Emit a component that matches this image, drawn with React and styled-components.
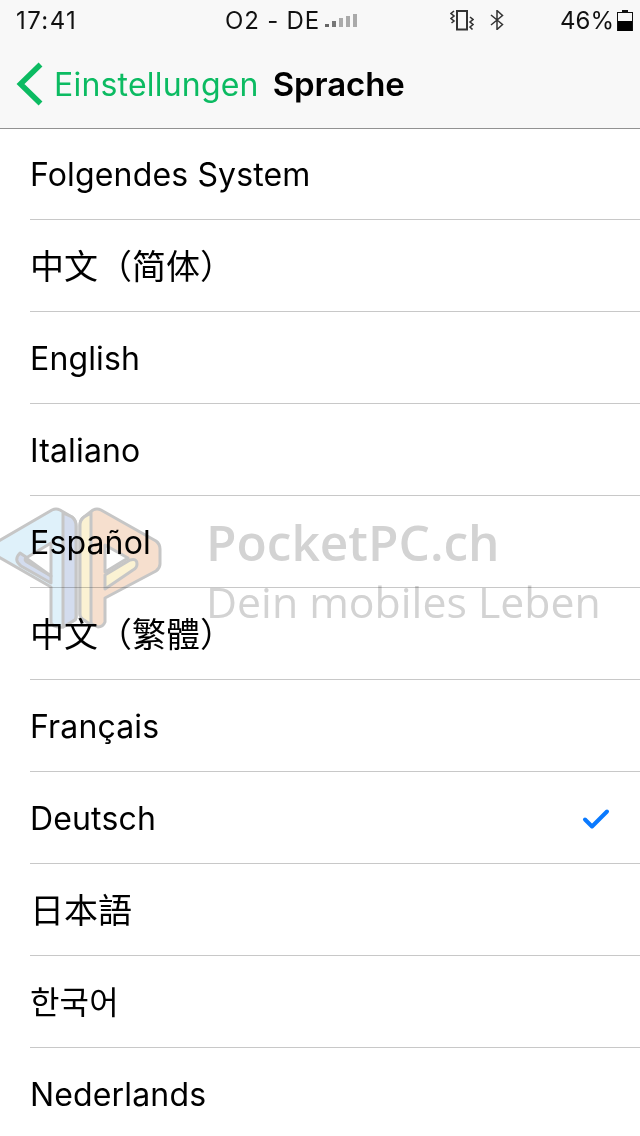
import React from 'react';
import styled, { createGlobalStyle } from 'styled-components';

const GlobalStyle = createGlobalStyle`
  html, body { margin: 0; padding: 0; background: #fff; }
  body { width: 640px; height: 1136px; overflow: hidden; }
`;

const sansStack = `"Inter", "Liberation Sans", "Noto Sans CJK SC", sans-serif`;

const Screen = styled.div`
  position: relative;
  width: 640px;
  height: 1136px;
  overflow: hidden;
  background: #fff;
  font-family: ${sansStack};
  color: #000;
`;

const Header = styled.header`
  position: relative;
  height: 128px;
  background: #f8f8f8;
  box-shadow: 0 1px 0 #929292;
  display: flex;
  flex-direction: column;
`;

const StatusBar = styled.div`
  height: 40px;
  padding: 0 7px 0 16px;
  display: grid;
  grid-template-columns: 209px 225px 1fr;
  align-items: center;
  font-size: 24px;
  color: #111;
`;

const Clock = styled.span`
  letter-spacing: 1.4px;
`;

const Carrier = styled.span`
  letter-spacing: 0.8px;
`;

const Battery = styled.span`
  margin: 0 3px 0 auto;
`;

const StatusGroup = styled.div`
  display: flex;
  align-items: center;
`;

const IconSlot = styled.span`
  display: flex;
  margin-left: ${p => p.$left || 0}px;
`;

const NavBar = styled.nav`
  flex: 1;
  display: flex;
  align-items: center;
  padding-left: 16px;
`;

const BackLabel = styled.span`
  margin-left: 10px;
  font-size: 32px;
  letter-spacing: 0.2px;
  color: #0cbb62;
`;

const Title = styled.h1`
  margin: 0 0 0 14px;
  font-size: 33px;
  font-weight: 600;
  letter-spacing: -0.1px;
`;

const List = styled.ul`
  margin: 0;
  padding: 0;
  list-style: none;
`;

const Row = styled.li`
  height: 92px;
  margin-left: 30px;
  padding: 2px 30px 0 0;
  box-sizing: border-box;
  display: flex;
  align-items: center;
  justify-content: space-between;
  font-size: ${p => (p.$cjk ? '34px' : '32px')};
  letter-spacing: ${p => (p.$cjk ? 0 : '0.15px')};
  line-height: 1;
  border-bottom: 1px solid #c8c8c8;
  &:last-child { border-bottom: 0; }
`;

const Watermark = styled.div`
  position: absolute;
  left: 206px;
  top: 511px;
  color: #d3d3d3;
  font-family: "Open Sans", "Liberation Sans", sans-serif;
  pointer-events: none;
  mix-blend-mode: multiply;
`;

const MarkTitle = styled.div`
  font-size: 49.6px;
  line-height: 62px;
  font-weight: 600;
`;

const MarkSub = styled.div`
  font-size: 42.8px;
  line-height: 58px;
`;

const Logo = styled.svg`
  position: absolute;
  left: 0;
  top: 500px;
  pointer-events: none;
  mix-blend-mode: multiply;
`;

const languages = [
  { name: 'Folgendes System' },
  { name: '中文（简体）', cjk: true },
  { name: 'English' },
  { name: 'Italiano' },
  { name: 'Español' },
  { name: '中文（繁體）', cjk: true },
  { name: 'Français' },
  { name: 'Deutsch', checked: true },
  { name: '日本語', cjk: true },
  { name: '한국어' },
  { name: 'Nederlands' },
];

function SignalBars() {
  return (
    <svg width="34" height="16" viewBox="0 0 34 16" style={{ marginLeft: 5, marginTop: 2 }}>
      <rect x="0" y="11" width="4" height="3" fill="#666" />
      <rect x="7" y="8" width="4" height="6" fill="#777" />
      <rect x="14" y="5" width="4" height="9" fill="#aaa" />
      <rect x="21" y="3" width="4" height="11" fill="#aaa" />
      <rect x="28" y="1" width="4" height="13" fill="#aaa" />
    </svg>
  );
}

function VibrateIcon() {
  return (
    <svg width="24" height="21" viewBox="0 0 24 21" fill="none" stroke="#333">
      <rect x="7" y="1" width="10" height="18.5" strokeWidth="2" />
      <path d="M4 1 L1 3.5 L4 6 L1 8.5 L4 11 L1.5 13" strokeWidth="1.6" />
      <path d="M20 7 L23 9.5 L20 12 L23 14.5 L20 17 L22.5 19.5" strokeWidth="1.6" />
    </svg>
  );
}

function BluetoothIcon() {
  return (
    <svg width="14" height="20" viewBox="0 0 14 20" fill="none" stroke="#333" strokeWidth="1.5">
      <path d="M1 5 L12.5 14.5 L7 19.5 V0.5 L12.5 5.5 L1 15" />
    </svg>
  );
}

function BatteryIcon() {
  return (
    <svg width="16" height="21" viewBox="0 0 16 21">
      <rect x="5" y="0" width="6" height="2" fill="#111" />
      <rect x="0.5" y="2.5" width="15" height="18" fill="none" stroke="#111" />
      <rect x="1" y="11" width="14" height="10" fill="#000" />
    </svg>
  );
}

function BackChevron() {
  return (
    <svg width="28" height="44" viewBox="0 0 28 44" fill="none" stroke="#0cbb62" strokeWidth="5.5">
      <path d="M24.5 2.5 L4.5 22 L24.5 41.5" />
    </svg>
  );
}

function CheckMark() {
  return (
    <svg width="28" height="22" viewBox="0 0 28 22" fill="none" stroke="#0a7aff" strokeWidth="4" strokeLinecap="round" strokeLinejoin="round">
      <path d="M3 11.5 L10 18.5 L25 3.5" />
    </svg>
  );
}

// coordinates are page pixels, the viewBox starts at y=500
function PocketLogo() {
  return (
    <Logo width="170" height="135" viewBox="0 500 170 135">
      <g stroke="#c6c6c6" strokeWidth="3" strokeLinejoin="round">
        <path d="M52 510 Q56 508 60 510 L72 517 Q76 520 76 526 V617 Q76 620 73 621 L63 627 Q58 628 54 626 L51 623 V587 L-3 556 Q-11 549 -3 542 Z" fill="#dff1fa" />
        <path d="M63 513 L72 517 Q76 520 76 526 V617 Q76 620 73 621 L63 627 Z" fill="#d3dcee" />
        <path d="M20 553 L26 557 Q24 560 27 562 L51 576 V583 L21 566 Q13 560 20 553 Z" fill="#d3dcee" />
        <path d="M26 558 L51 543 V576 Z" fill="#fff" />
        <path d="M93 510 Q97 508 101 510 L156 541 Q160 544 160 549 V564 Q160 568 156 571 L105 598 V622 Q103 627 98 627 L84 620 Q80 618 80 614 V525 Q80 520 84 517 Z" fill="#f6dfce" />
        <path d="M91 513 V625 L84 620 Q80 618 80 614 V525 Q80 520 84 517 Z" fill="#fbf2d3" />
        <path d="M105 575 L130 560 Q137 558 137 564 Q137 568 133 570 L105 589 Z" fill="#fbf2d3" />
        <path d="M105 545 L128 558 L105 572 Z" fill="#fff" />
      </g>
    </Logo>
  );
}

export default function App() {
  return (
    <Screen>
      <GlobalStyle />
      <Header>
        <StatusBar>
          <Clock>17:41</Clock>
          <StatusGroup>
            <Carrier>O2 - DE</Carrier>
            <SignalBars />
          </StatusGroup>
          <StatusGroup>
            <IconSlot $left={0}><VibrateIcon /></IconSlot>
            <IconSlot $left={16}><BluetoothIcon /></IconSlot>
            <Battery>46%</Battery>
            <BatteryIcon />
          </StatusGroup>
        </StatusBar>
        <NavBar>
          <BackChevron />
          <BackLabel>Einstellungen</BackLabel>
          <Title>Sprache</Title>
        </NavBar>
      </Header>
      <List>
        {languages.map(item => (
          <Row key={item.name} $cjk={item.cjk}>
            <span>{item.name}</span>
            {item.checked && <CheckMark />}
          </Row>
        ))}
      </List>
      <PocketLogo />
      <Watermark>
        <MarkTitle>PocketPC.ch</MarkTitle>
        <MarkSub>Dein mobiles Leben</MarkSub>
      </Watermark>
    </Screen>
  );
}
